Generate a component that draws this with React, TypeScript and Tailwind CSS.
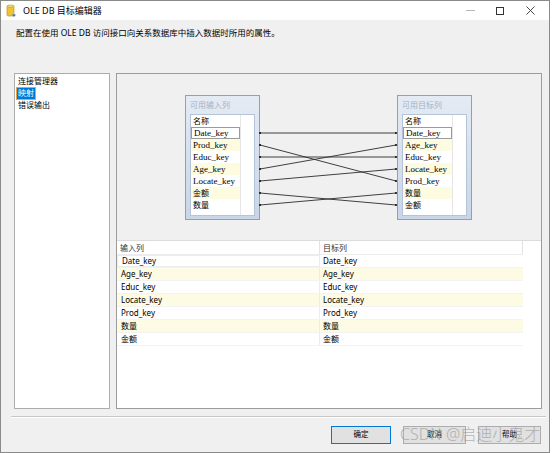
import React from 'react';

const FONT = "font-['Noto_Sans','Noto_Sans_CJK_SC',sans-serif]";
const SERIF = "font-['Liberation_Serif','Noto_Sans_CJK_SC',serif]";

const INPUTS = ['Date_key', 'Prod_key', 'Educ_key', 'Age_key', 'Locate_key', '金额', '数量'];
const TARGETS = ['Date_key', 'Age_key', 'Educ_key', 'Locate_key', 'Prod_key', '数量', '金额'];

const GRID_ROWS = [
  ['Date_key', 'Date_key'],
  ['Age_key', 'Age_key'],
  ['Educ_key', 'Educ_key'],
  ['Locate_key', 'Locate_key'],
  ['Prod_key', 'Prod_key'],
  ['数量', '数量'],
  ['金额', '金额'],
];

// row centre y (page coords) for diagram lists
const rowY = (i: number) => 133 + i * 12;

const isCjk = (s: string) => /[^\x00-\x7f]/.test(s);

function ColumnBox({ title, items, left }: { title: string; items: string[]; left: number }) {
  return (
    <div
      className="absolute top-[21px] w-[75px] h-[125px] border border-[#8fa0b8] bg-gradient-to-b from-[#e4ebf4] to-[#c8d6e8] flex flex-col"
      style={{ left }}
    >
      <div className={`h-[18px] pl-[4px] flex items-center text-[8px] text-[#a9b2c2] ${FONT}`}>{title}</div>
      <div className="mx-[4px] mb-[3px] flex-1 bg-white border border-[#b5c3d6] flex">
        <div className="w-[50px] border-r border-[#e6e6e6] flex flex-col">
          <div className={`h-[12px] pl-[2px] flex items-center text-[8px] text-black ${FONT}`}>名称</div>
          {items.map((it, i) => (
            <div
              key={it}
              className={`h-[12px] pl-[2px] flex items-center leading-none text-black ${
                isCjk(it) ? `text-[8px] ${FONT}` : `text-[9px] ${SERIF}`
              } ${i === 0 ? 'border border-[#9a9a9a]' : i % 2 === 1 ? 'bg-[#fdfbe0]' : ''}`}
            >
              {it}
            </div>
          ))}
        </div>
      </div>
    </div>
  );
}

function Diagram() {
  const pairs = INPUTS.map((name, i) => [rowY(i), rowY(TARGETS.indexOf(name))]);
  return (
    <div className="relative h-[166px] bg-[#f0f0f0]">
      <ColumnBox title="可用输入列" items={INPUTS} left={68} />
      <ColumnBox title="可用目标列" items={TARGETS} left={280} />
      <svg className="absolute inset-0" width="424" height="166" viewBox="117 74 424 166">
        {pairs.map(([a, b], i) => (
          <g key={i}>
            <line x1={260} y1={a} x2={396} y2={b} stroke="#2b2b2b" strokeWidth="0.9" />
            <rect x={259} y={a - 0.8} width={2} height={1.6} fill="#111" />
            <rect x={395} y={b - 0.8} width={2} height={1.6} fill="#111" />
          </g>
        ))}
      </svg>
    </div>
  );
}

function Grid() {
  return (
    <div className={`flex-1 bg-white border-t border-[#dcdcdc] text-[8px] text-black ${FONT}`}>
      <div className="flex h-[14px] w-[406px] border-b border-[#ececec] text-[#333]">
        <div className="w-[203px] pl-[3px] flex items-center border-r border-[#e3e3e3]">输入列</div>
        <div className="w-[203px] pl-[3px] flex items-center border-r border-[#e3e3e3]">目标列</div>
      </div>
      {GRID_ROWS.map(([a, b], i) => (
        <div
          key={i}
          className={`flex h-[13px] w-[406px] border-b border-[#f3f3f3] ${i % 2 === 1 ? 'bg-[#fdfbe3]' : ''}`}
        >
          <div
            className={`w-[203px] pl-[4px] flex items-center border-r border-[#ececec] ${
              i === 0 ? 'border border-[#8f8f8f] bg-white' : ''
            }`}
          >
            {a}
          </div>
          <div className="w-[203px] pl-[3px] flex items-center">{b}</div>
        </div>
      ))}
    </div>
  );
}

function DbIcon() {
  return (
    <svg width="12" height="14" viewBox="0 0 12 14">
      <rect x="1" y="1.5" width="7" height="10.5" rx="1.2" fill="#f1c232" stroke="#b58a12" strokeWidth="0.6" />
      <ellipse cx="4.5" cy="2.2" rx="3.5" ry="1.2" fill="#f8dc7a" stroke="#b58a12" strokeWidth="0.5" />
      <path d="M6 10.5 L10 10.5 L8 13 Z" fill="#2f6fd1" />
    </svg>
  );
}

export default function App() {
  return (
    <div className={`w-[554px] h-[453px] bg-white ${FONT}`}>
      <div className="w-[550px] h-[453px] border border-[#8a8a8a] flex flex-col">
        {/* Title bar */}
        <div className="h-[19px] bg-white flex items-center shrink-0">
          <div className="ml-[5px] mr-[5px] flex items-center">
            <DbIcon />
          </div>
          <span className="text-[9px] text-black">OLE DB 目标编辑器</span>
          <div className="ml-auto flex items-center h-full">
            <div className="w-[30px] flex justify-center">
              <div className="w-[9px] h-px bg-[#b8b8b8]" />
            </div>
            <div className="w-[30px] flex justify-center">
              <div className="w-[8px] h-[8px] border border-[#333]" />
            </div>
            <div className="w-[30px] flex justify-center mr-[4px]">
              <svg width="9" height="9" viewBox="0 0 9 9">
                <path d="M0.5 0.5 L8.5 8.5 M8.5 0.5 L0.5 8.5" stroke="#333" strokeWidth="0.9" />
              </svg>
            </div>
          </div>
        </div>

        {/* Body */}
        <div className="flex-1 bg-[#f0f0f0] flex flex-col">
          <div className="pt-[7px] pl-[15px] h-[19px] text-[8.5px] leading-[12px] text-black">
            配置在使用 OLE DB 访问接口向关系数据库中插入数据时所用的属性。
          </div>

          <div className="mt-[34px] pl-[13px] flex gap-[6px] h-[336px]">
            {/* Left nav */}
            <div className="w-[96px] bg-white border border-[#acacac] pt-px text-[8px] text-black">
              <div className="h-[12px] pl-[3px] flex items-center">连接管理器</div>
              <div className="h-[12px] pl-[2px] flex items-center">
                <span className="bg-[#0078d7] text-white px-px h-[11px] flex items-center outline outline-1 outline-[#e3a34a]">
                  映射
                </span>
              </div>
              <div className="h-[12px] pl-[3px] flex items-center">错误输出</div>
            </div>

            {/* Right panel */}
            <div className="w-[426px] border border-[#9c9c9c] flex flex-col bg-white">
              <Diagram />
              <Grid />
            </div>
          </div>

          {/* Separator */}
          <div className="mt-[7px] ml-[10px] mr-[3px] h-[2px] border-t border-[#c8c8c8] border-b border-b-white" />

          {/* Buttons */}
          <div className="relative mt-[8px] pl-[330px] flex gap-[12px]">
            <button className="w-[60px] h-[18px] bg-[#e1e1e1] border border-[#0078d7] text-[7.5px] text-black">
              确定
            </button>
            <button className="w-[63px] h-[18px] bg-[#e1e1e1] border border-[#adadad] text-[7.5px] text-black">
              取消
            </button>
            <button className="w-[63px] h-[18px] bg-[#e1e1e1] border border-[#adadad] text-[7.5px] text-black">
              帮助
            </button>
            <div className="absolute left-[399px] top-[-3px] text-[16px] leading-[22px] text-[#a0a0a0] opacity-75 pointer-events-none whitespace-nowrap font-light">
              CSDN @启迪小鬼才
            </div>
          </div>
        </div>
      </div>
    </div>
  );
}
